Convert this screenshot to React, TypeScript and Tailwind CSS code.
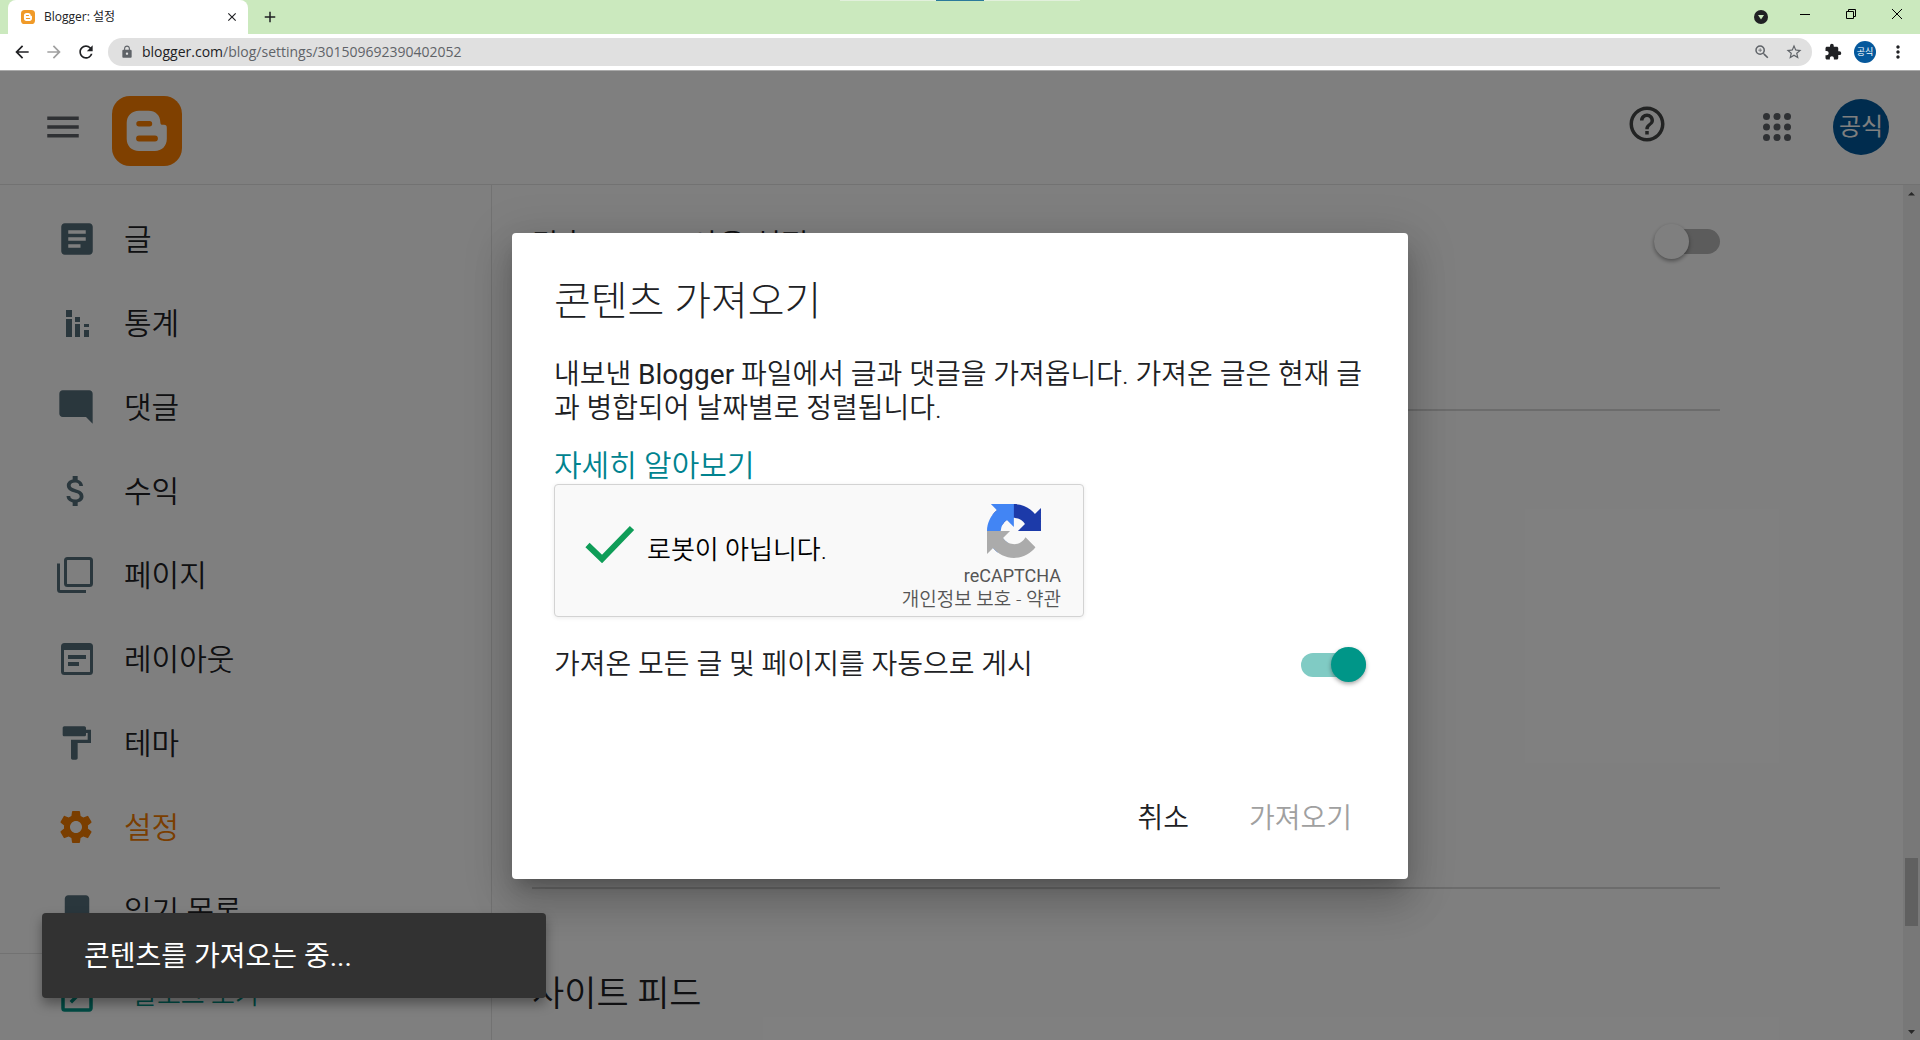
import { useState } from "react";
import type { ReactNode } from "react";
import {
    MdArrowBack,
    MdArrowForward,
    MdArticle,
    MdAttachMoney,
    MdBookmark,
    MdClose,
    MdExtension,
    MdFormatPaint,
    MdHelpOutline,
    MdLock,
    MdMenu,
    MdModeComment,
    MdMoreVert,
    MdOpenInNew,
    MdAdd,
    MdRefresh,
    MdSettings,
    MdStarOutline,
    MdZoomIn,
} from "react-icons/md";

const BloggerLogo = ({ className, color }: { className: string; color: string }) => (
    <svg viewBox="0 0 70 70" className={className} aria-hidden="true">
        <rect width="70" height="70" rx="18" fill={color} />
        <path
            fill="#fff"
            fillRule="evenodd"
            d="M27 14.7h9.5c7 0 11.8 4.800 11.800 11.300 0 2 .7 2.800 2.700 2.800h1c2 0 2.800.9 2.800 2.900V43c0 7-5 12-12 12H27c-7.300 0-12.300-5-12.300-12V27c0-7.300 5-12.300 12.300-12.300zM27 25a2.700 2.700 0 0 0 0 5.400h10.500a2.700 2.700 0 0 0 0-5.400zM27 39.600a2.900 2.900 0 0 0 0 5.800h16a2.900 2.900 0 0 0 0-5.800z"
        />
    </svg>
);

const StatsIcon = () => (
    <svg viewBox="0 0 42 42" className="size-[42px]" fill="currentColor" aria-hidden="true">
        <path d="M10 8h6v7h-6zM10 17h6v18h-6zM19 15h5v5h-5zM19 22h5v13h-5zM28 22h5v3h-5zM28 28h5v7h-5z" />
    </svg>
);

const PagesIcon = () => (
    <svg viewBox="0 0 42 42" className="size-[42px]" fill="none" stroke="currentColor" strokeWidth="3" aria-hidden="true">
        <rect x="9.500" y="4.500" width="26" height="27" rx="2" />
        <path d="M2.500 9.500v26q0 2 2 2h25.500" />
    </svg>
);

const LayoutIcon = () => (
    <svg viewBox="0 0 42 42" className="size-[42px]" aria-hidden="true">
        <rect x="6.500" y="6.500" width="29" height="29" rx="2" fill="none" stroke="currentColor" strokeWidth="3" />
        <path fill="currentColor" d="M6 6h30v6H6zM12 17h18v4H12zM12 24h11v4H12z" />
    </svg>
);

const RecaptchaLogo = () => (
    <svg viewBox="0 0 64 64" className="size-[54px]" aria-hidden="true">
        <path
            fill="#1c3aa9"
            d="M64 31.955l-.033-1.370V4.687l-7.160 7.160C50.948 4.674 42.033.093 32.050.093c-10.400 0-19.622 4.960-25.458 12.640l11.736 11.860a15.550 15.550 0 0 1 4.754-5.334c2.050-1.600 4.952-2.906 8.968-2.906.485 0 .860.057 1.135.163 4.976.393 9.288 3.140 11.828 7.124l-8.307 8.307L64 31.953"
        />
        <path
            fill="#4285f4"
            d="M31.862.094l-1.370.033H4.594l7.160 7.160C4.580 13.147 0 22.060 0 32.046c0 10.400 4.960 19.622 12.640 25.458L24.500 45.768a15.550 15.550 0 0 1-5.334-4.754c-1.600-2.050-2.906-4.952-2.906-8.968 0-.485.057-.860.163-1.135.393-4.976 3.140-9.288 7.124-11.828l8.307 8.307L31.860.095"
        />
        <path
            fill="#ababab"
            d="M.001 32.045l.033 1.370v25.898l7.160-7.160c5.860 7.173 14.774 11.754 24.760 11.754 10.400 0 19.622-4.960 25.458-12.640l-11.736-11.860a15.550 15.550 0 0 1-4.754 5.334c-2.050 1.600-4.952 2.906-8.968 2.906-.485 0-.860-.057-1.135-.163-4.976-.393-9.288-3.140-11.828-7.124l8.307-8.307c-10.522.040-22.400.066-27.295-.005"
        />
    </svg>
);

const menu: { label: string; icon: ReactNode; active?: boolean }[] = [
    { label: "글", icon: <MdArticle className="size-[42px]" /> },
    { label: "통계", icon: <StatsIcon /> },
    { label: "댓글", icon: <MdModeComment className="size-[40px]" /> },
    { label: "수익", icon: <MdAttachMoney className="size-[40px]" /> },
    { label: "페이지", icon: <PagesIcon /> },
    { label: "레이아웃", icon: <LayoutIcon /> },
    { label: "테마", icon: <MdFormatPaint className="size-[40px]" /> },
    { label: "설정", icon: <MdSettings className="size-[40px]" />, active: true },
    { label: "읽기 목록", icon: <MdBookmark className="size-[42px]" /> },
];

const Browser = () => (
    <div className="shrink-0 font-['Open_Sans','Noto_Sans_CJK_KR',sans-serif]">
        <div className="relative flex h-[34px] items-stretch bg-[#cbe9be] pl-2 text-[#202124]">
            <div className="absolute top-0 left-1/2 flex h-px w-60 -translate-x-1/2 justify-center bg-[#e2f0dc]">
                <span className="w-12 bg-[#2b7a9b]" />
            </div>
            <div className="flex w-60 items-center rounded-t-lg bg-white pr-2 pl-[13px]">
                <BloggerLogo className="size-[14px]" color="#f09a28" />
                <span className="ml-[9px] flex-1 text-xs">Blogger: 설정</span>
                <button aria-label="탭 닫기" className="p-px">
                    <MdClose className="size-[14px]" />
                </button>
            </div>
            <button aria-label="새 탭" className="ml-[13px]">
                <MdAdd className="size-[18px]" />
            </button>
            <div className="ml-auto flex items-center text-black">
                <button aria-label="탭 검색" className="mr-[6px] w-[30px]">
                    <svg viewBox="0 0 14 14" className="mx-auto size-[14px]">
                        <circle cx="7" cy="7" r="7" fill="#202124" />
                        <path d="M4 5h6L7 9.500z" fill="#cbe9be" />
                    </svg>
                </button>
                <button aria-label="최소화" className="mb-[6px] w-[46px]">
                    <svg viewBox="0 0 10 10" className="mx-auto size-[10px]" stroke="currentColor">
                        <path d="M0 5.500h10" />
                    </svg>
                </button>
                <button aria-label="이전 크기로 복원" className="mb-[6px] w-[46px]">
                    <svg viewBox="0 0 10 10" className="mx-auto size-[10px]" stroke="currentColor" fill="none">
                        <path d="M.5 2.500h7v7h-7zM2.500 2V.5h7v7H8" />
                    </svg>
                </button>
                <button aria-label="닫기" className="mb-[6px] w-[46px]">
                    <svg viewBox="0 0 10 10" className="mx-auto size-[10px]" stroke="currentColor">
                        <path d="M0 0l10 10M10 0L0 10" />
                    </svg>
                </button>
            </div>
        </div>

        <div className="flex h-[37px] items-center border-b border-[#aaaaaa] bg-white px-3 text-[#202124]">
            <div className="flex gap-3">
                <button aria-label="뒤로"><MdArrowBack className="size-5" /></button>
                <button aria-label="앞으로" className="text-[#a0a0a0]"><MdArrowForward className="size-5" /></button>
                <button aria-label="새로고침"><MdRefresh className="size-5" /></button>
            </div>
            <div className="ml-3 flex h-7 flex-1 items-center rounded-full bg-[#e0e0e0] px-3 text-[#5f6368]">
                <MdLock className="size-[14px]" />
                <p className="ml-2 flex-1 text-sm">
                    <span className="text-[#202124]">blogger.com</span>/blog/settings/301509692390402052
                </p>
                <button aria-label="확대/축소"><MdZoomIn className="size-[18px]" /></button>
                <button aria-label="북마크 추가" className="-mr-[3px] ml-[14px]"><MdStarOutline className="size-[18px]" /></button>
            </div>
            <div className="ml-3 flex items-center gap-3">
                <button aria-label="확장 프로그램"><MdExtension className="size-[18px]" /></button>
                <button className="size-[22px] rounded-full bg-[#05589c] text-[9px] text-white">공식</button>
                <button aria-label="메뉴"><MdMoreVert className="size-5" /></button>
            </div>
        </div>
    </div>
);

const Header = () => (
    <header className="flex h-[114px] shrink-0 items-center border-b border-[#e4e4e4] pr-[31px] pb-[2px] pl-[42px]">
        <button aria-label="기본 메뉴" className="text-[#5f6368]">
            <MdMenu className="size-[42px]" />
        </button>
        <a href="#" aria-label="Blogger" className="mt-2 ml-7">
            <BloggerLogo className="size-[70px]" color="#ff8000" />
        </a>
        <button aria-label="도움말" className="mb-[6px] ml-auto text-[#444746]">
            <MdHelpOutline className="size-[42px]" />
        </button>
        <button aria-label="Google 앱" className="ml-[95px] text-[#5f6368]">
            <svg viewBox="0 0 28 28" className="size-7" fill="currentColor">
                {[3.5, 14, 24.5].map((y) =>
                    [3.5, 14, 24.5].map((x) => <circle key={`${x}-${y}`} cx={x} cy={y} r="3.500" />)
                )}
            </svg>
        </button>
        <button className="ml-[42px] size-14 rounded-full bg-[#00589c] text-2xl text-white">공식</button>
    </header>
);

const Sidebar = () => (
    <nav className="w-[492px] shrink-0 border-r border-[#e4e4e4] pt-3 font-[350] text-[#202124]">
        {menu.map((item) => (
            <a
                key={item.label}
                href="#"
                className={`flex h-[84px] items-center gap-[26px] pl-14 text-[30px] ${item.active ? "text-[#f57c00]" : ""}`}
            >
                <span className={`flex w-[42px] ${item.active ? "" : "text-[#546e7a]"}`}>{item.icon}</span>
                {item.label}
            </a>
        ))}
        <a href="#" className="flex h-[84px] items-center gap-[35px] border-t border-[#e4e4e4] pl-14 text-[26px] text-[#009688]">
            <MdOpenInNew className="size-[42px]" />
            블로그 보기
        </a>
    </nav>
);

const Scrollbar = () => (
    <div className="flex w-[17px] shrink-0 flex-col items-center bg-[#f1f1f1] text-[#505050]" aria-hidden="true">
        <svg viewBox="0 0 17 17" className="size-[17px]"><path d="M5 10.500h7L8.500 7z" fill="currentColor" /></svg>
        <div className="flex-34" />
        <div className="h-[68px] w-[13px] bg-[#c1c1c1]" />
        <div className="flex-5" />
        <svg viewBox="0 0 17 17" className="size-[17px]"><path d="M5 7h7l-3.500 4z" fill="currentColor" /></svg>
    </div>
);

const ImportDialog = () => {
    const [publish, setPublish] = useState(true);

    return (
        <div
            role="dialog"
            aria-labelledby="import-title"
            className="w-[896px] rounded-sm bg-white px-[42px] pt-[45px] pb-9 text-[28px] font-[350] text-[#202124] shadow-[0_11px_15px_-7px_rgba(0,0,0,0.2),0_24px_38px_3px_rgba(0,0,0,0.14),0_9px_46px_8px_rgba(0,0,0,0.12)]"
        >
            <h2 id="import-title" className="text-[40px] leading-12 font-light">콘텐츠 가져오기</h2>
            <p className="mt-8 leading-[34px]">
                내보낸 <span className="font-normal">Blogger</span> 파일에서 글과 댓글을 가져옵니다. 가져온 글은 현재 글과 병합되어 날짜별로 정렬됩니다.
            </p>
            <a href="#" className="mt-[22px] block text-[30px] leading-9 text-[#00838f]">자세히 알아보기</a>

            <div className="flex h-[133px] w-[530px] items-center rounded-[4px] border border-[#d3d3d3] bg-[#f9f9f9] pr-[22px] pl-[30px] shadow-[0_1px_4px_rgba(0,0,0,0.08)]">
                <svg viewBox="0 0 50 38" className="mb-3 h-[38px] w-[50px]" fill="none" stroke="#0f9d58" strokeWidth="6" aria-hidden="true">
                    <path d="M2.500 20L17 34 47 3" />
                </svg>
                <p className="ml-3 flex-1 text-[26px] text-black">로봇이 아닙니다.</p>
                <div className="flex flex-col items-end pt-4 text-[#555555]">
                    <div className="mr-5"><RecaptchaLogo /></div>
                    <p className="mt-[6px] text-lg leading-6 font-normal">reCAPTCHA</p>
                    <p className="text-[19px] leading-6">
                        <a href="#">개인정보 보호</a> - <a href="#">약관</a>
                    </p>
                </div>
            </div>

            <div className="mt-6 flex h-12 items-center justify-between">
                <label htmlFor="publish">가져온 모든 글 및 페이지를 자동으로 게시</label>
                <input
                    id="publish"
                    type="checkbox"
                    role="switch"
                    checked={publish}
                    onChange={(e) => setPublish(e.target.checked)}
                    className="flex h-6 w-[65px] appearance-none items-center rounded-full bg-[#b0b0b0] before:size-[35px] before:shrink-0 before:rounded-full before:bg-white before:shadow-[0_2px_4px_rgba(0,0,0,0.35)] checked:justify-end checked:bg-[#80cbc4] checked:before:bg-[#009688]"
                />
            </div>

            <div className="mt-[106px] flex justify-end gap-[60px] pr-[14px]">
                <button className="h-12">취소</button>
                <button className="h-12 text-[#a0a0a0]" disabled>가져오기</button>
            </div>
        </div>
    );
};

export default function App() {
    return (
        <div className="flex h-screen flex-col overflow-hidden">
            <Browser />
            <div className="relative flex min-h-0 flex-1 flex-col bg-white font-['Roboto','Noto_Sans_CJK_KR',sans-serif]">
                <Header />
                <div className="flex min-h-0 flex-1 overflow-hidden">
                    <Sidebar />
                    <main className="flex-1 pr-[183px] pl-10 font-[350] text-[#202124]">
                        <section className="h-[226px] border-b-2 border-[#d8d8d8] pt-8">
                            <div className="flex h-12 items-center justify-between text-[30px]">
                                <label htmlFor="ads" className="pt-[6px]">맞춤 ads.txt 사용 설정</label>
                                <input
                                    id="ads"
                                    type="checkbox"
                                    role="switch"
                                    className="flex h-[25px] w-[66px] appearance-none items-center rounded-full bg-[#b8b8b8] before:size-[35px] before:shrink-0 before:rounded-full before:bg-white before:shadow-[0_2px_4px_rgba(0,0,0,0.4)]"
                                />
                            </div>
                        </section>
                        <section className="h-[478px] border-b-2 border-[#d8d8d8]" />
                        <h2 className="mt-[82px] text-[35px] leading-12">사이트 피드</h2>
                    </main>
                    <Scrollbar />
                </div>

                <div className="absolute inset-0 flex items-center justify-center bg-black/50">
                    <ImportDialog />
                </div>

                <div
                    role="status"
                    className="absolute bottom-[42px] left-[42px] flex h-[85px] w-[504px] items-center rounded-sm bg-[#323232] px-[42px] pt-[3px] text-[28px] text-white shadow-[0_6px_12px_rgba(0,0,0,0.35)]"
                >
                    콘텐츠를 가져오는 중...
                </div>
            </div>
        </div>
    );
}
